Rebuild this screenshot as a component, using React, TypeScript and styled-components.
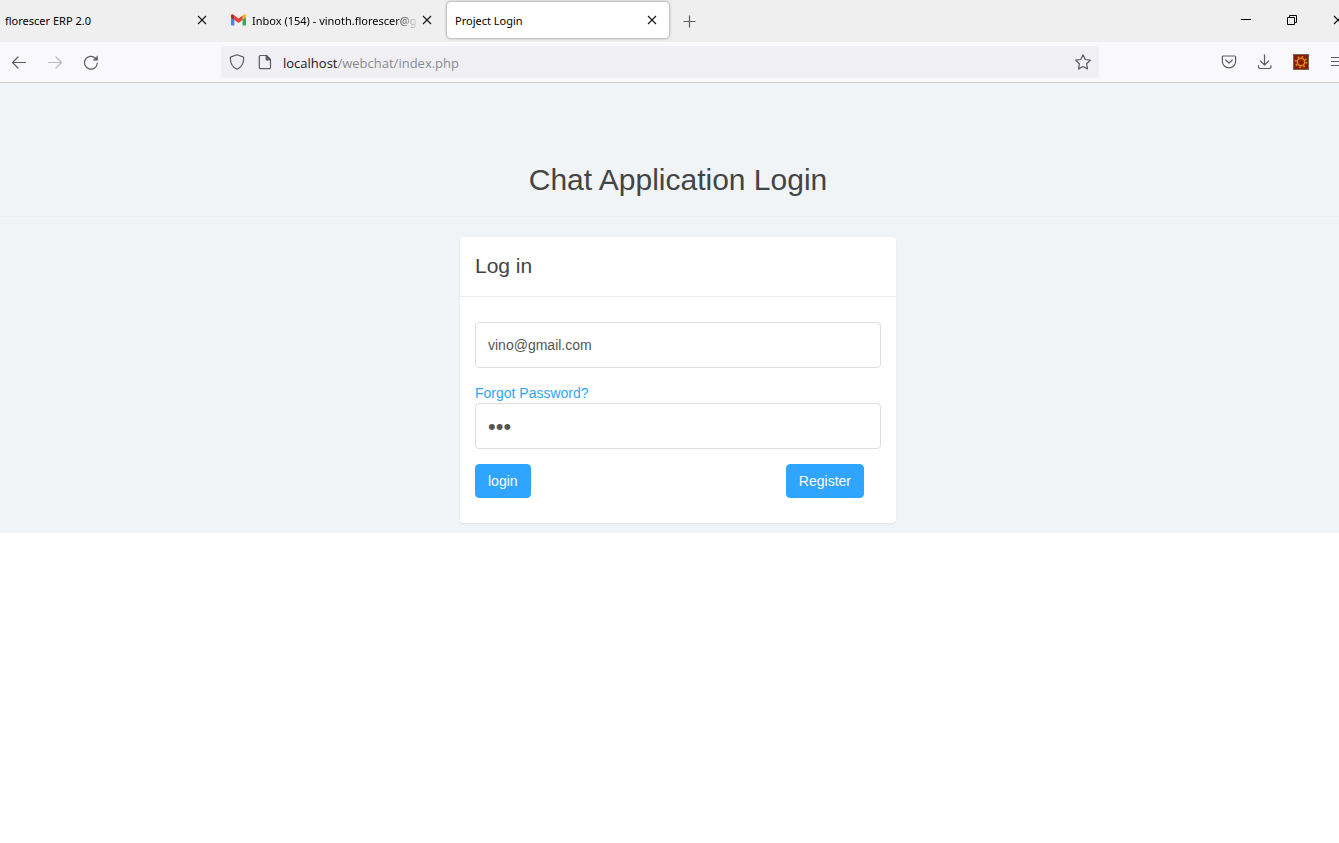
import React, { useState } from "react";
import styled, { createGlobalStyle } from "styled-components";

const GlobalStyle = createGlobalStyle`
  *, *::before, *::after { box-sizing: border-box; }
  body { margin: 0; background: #fff; color: #444; overflow-x: hidden; font: 14px/20px "Liberation Sans", Arial, sans-serif; }
  button, input { font-family: inherit; }
  svg { display: block; flex: none; }
`;

const Viewport = styled.div`
  overflow: hidden;
`;

/* The window is maximised and runs slightly past both edges of the screen area. */
const BrowserWindow = styled.div`
  margin: 0 -22px 0 -5px;
`;

const TabStrip = styled.div`
  display: flex;
  align-items: center;
  gap: 3px;
  height: 42px;
  padding-left: 2px;
  background: #efefef;
  font: 11px/16px "Noto Sans", "Segoe UI", sans-serif;
  color: #000;
`;

const Tab = styled.div<{ $active?: boolean }>`
  display: flex;
  align-items: center;
  gap: 6px;
  width: 222px;
  height: 36px;
  margin-bottom: 2px;
  padding: 0 9px 0 8px;
  border-radius: 4px;
  background: ${(p) => (p.$active ? "#fff" : "transparent")};
  box-shadow: ${(p) => (p.$active ? "0 0 3px rgba(0, 0, 0, 0.5)" : "none")};
`;

const TabTitle = styled.span<{ $fade?: boolean }>`
  flex: 1;
  min-width: 0;
  padding-top: 1px;
  white-space: nowrap;
  ${(p) => p.$fade && "margin-right: -6px; mask-image: linear-gradient(to left, transparent, #000 24px);"}
`;

const IconButton = styled.button<{ $w: number; $dim?: boolean }>`
  display: flex;
  align-items: center;
  justify-content: center;
  flex: none;
  width: ${(p) => p.$w}px;
  height: 32px;
  padding: 0;
  border: 0;
  background: none;
  color: #5b5b66;
  opacity: ${(p) => (p.$dim ? 0.4 : 1)};
`;

const CloseButton = styled(IconButton)`
  height: 16px;
  color: #15141a;
`;

const WindowControls = styled.div`
  display: flex;
  margin-left: auto;
  margin-bottom: 2px;
  button { color: #000; }
`;

const Toolbar = styled.div`
  display: flex;
  align-items: center;
  height: 41px;
  padding: 0 6px;
  background: #f9f9fb;
  border-bottom: 1px solid #ccc;
`;

const ToolGroup = styled.div`
  display: flex;
`;

const AddressBar = styled.div`
  display: flex;
  align-items: center;
  gap: 10px;
  flex: 1;
  height: 32px;
  margin: 0 112px;
  padding: 0 8px;
  border-radius: 4px;
  background: #f0f0f4;
  color: #5b5b66;
`;

const SiteIcons = styled.div`
  display: flex;
  gap: 12px;
`;

const Address = styled.div`
  flex: 1;
  padding-top: 2px;
  font: 13px/18px "Open Sans", "Segoe UI", sans-serif;
  color: #8a8a8e;
`;

const Host = styled.span`
  color: #15141a;
`;

const Page = styled.main`
  padding: 80px 0 10px;
  background: #f0f4f7;
`;

const Title = styled.h2`
  margin: 0;
  padding-bottom: 20px;
  border-bottom: 1px solid #eee;
  font-size: 30px;
  font-weight: 400;
  line-height: 33px;
  text-align: center;
`;

const Card = styled.section`
  width: 436px;
  max-width: 100%;
  margin: 20px auto 0;
  border-radius: 4px;
  background: #fff;
  box-shadow: 0 1px 2px rgba(0, 0, 0, 0.08);
`;

const CardHeading = styled.h3`
  margin: 0;
  padding: 14px 15px 15px;
  border-bottom: 1px solid #e9ecf2;
  font-size: 21px;
  font-weight: 400;
  line-height: 30px;
`;

const Form = styled.form`
  padding: 25px 15px;
`;

const Field = styled.div`
  display: flex;
  flex-direction: column;
  align-items: flex-start;
  margin-bottom: 15px;
`;

const TextInput = styled.input`
  width: 100%;
  height: 46px;
  padding: 6px 12px;
  border: 1px solid #ddd;
  border-radius: 4px;
  background: #fff;
  color: #555;
  font-size: 14px;
  line-height: 20px;
  outline: none;

  &[type="password"] { padding-top: 8px; font-size: 22px; }
`;

const ForgotLink = styled.a`
  color: #30a5ff;
  text-decoration: none;
`;

const Actions = styled.div`
  display: flex;
  justify-content: space-between;
  padding-right: 17px;
`;

const PrimaryButton = styled.button`
  height: 34px;
  padding: 6px 12px;
  border: 1px solid #30a5ff;
  border-radius: 4px;
  background: #30a5ff;
  color: #fff;
  font-size: 14px;
  line-height: 20px;
`;

const Cross = () => (
  <svg width="10" height="10" viewBox="0 0 10 10" stroke="currentColor" strokeWidth="1.1" fill="none">
    <path d="M1 1l8 8M9 1L1 9" />
  </svg>
);

const Gmail = () => (
  <svg width="16" height="12" viewBox="-1 0 16 12">
    <path d="M0 2.5L3.4 5v6.5H1a1 1 0 0 1-1-1z" fill="#4285f4" />
    <path d="M15 2.5L11.6 5v6.5H14a1 1 0 0 0 1-1z" fill="#34a853" />
    <path d="M11.6 1.5l1-.8C13.700-.1 15 .6 15 2v1.500L11.6 6z" fill="#fbbc04" />
    <path d="M3.400 1.500L7.500 4.600l4.100-3.100V6L7.500 9 3.400 6z" fill="#ea4335" />
    <path d="M0 3.500V2C0 .6 1.300-.1 2.400.7l1 .8V6z" fill="#c5221f" />
  </svg>
);

const Icon = ({ children }: { children: React.ReactNode }) => (
  <svg width="16" height="16" viewBox="0 0 16 16" fill="none" stroke="currentColor" strokeWidth="1.2" strokeLinecap="round" strokeLinejoin="round">
    {children}
  </svg>
);

function TabBar() {
  return (
    <TabStrip>
      <Tab>
        <TabTitle>florescer ERP 2.0</TabTitle>
        <CloseButton $w={16} aria-label="Close tab"><Cross /></CloseButton>
      </Tab>
      <Tab>
        <Gmail />
        <TabTitle $fade>Inbox (154) - vinoth.florescer@g</TabTitle>
        <CloseButton $w={16} aria-label="Close tab"><Cross /></CloseButton>
      </Tab>
      <Tab $active>
        <TabTitle>Project Login</TabTitle>
        <CloseButton $w={16} aria-label="Close tab"><Cross /></CloseButton>
      </Tab>
      <IconButton $w={34} aria-label="New tab">
        <svg width="13" height="13" viewBox="0 0 13 13" stroke="currentColor" strokeWidth="1.2">
          <path d="M6.500 .5v12M.5 6.500h12" />
        </svg>
      </IconButton>
      <WindowControls>
        <IconButton $w={46} aria-label="Minimize">
          <svg width="10" height="11" viewBox="0 0 10 11" stroke="currentColor"><path d="M0 4.500h10" /></svg>
        </IconButton>
        <IconButton $w={46} aria-label="Restore">
          <svg width="10" height="10" viewBox="0 0 10 10" stroke="currentColor" fill="none">
            <path d="M.5 2.500h7v7h-7zM2.500 2.500v-2h7v7h-2" />
          </svg>
        </IconButton>
        <IconButton $w={46} aria-label="Close"><Cross /></IconButton>
      </WindowControls>
    </TabStrip>
  );
}

function NavigationBar() {
  return (
    <Toolbar>
      <ToolGroup>
        <IconButton $w={36} aria-label="Back">
          <Icon><path d="M14.500 8.500H1.500M7 3L1.500 8.500 7 14" /></Icon>
        </IconButton>
        <IconButton $w={36} $dim aria-label="Forward">
          <Icon><path d="M1.500 8.500h13M9 3L14.500 8.500 9 14" /></Icon>
        </IconButton>
        <IconButton $w={36} aria-label="Reload">
          <Icon>
            <path d="M14.300 9A6.400 6.400 0 1 1 12.200 4" />
            <path d="M14.500 2.200v4h-4z" fill="currentColor" strokeWidth=".6" />
          </Icon>
        </IconButton>
      </ToolGroup>
      <AddressBar>
        <SiteIcons>
          <Icon><path d="M8 .8l5.900 2.100c.5.200.8.600.8 1.100 0 4.400-1.400 8.800-6.700 11.200C2.700 12.800 1.300 8.400 1.300 4c0-.5.300-.9.800-1.100z" /></Icon>
          <Icon>
            <path d="M3.500 1.500h6l4 4v8a1.200 1.200 0 0 1-1.200 1.200H3.500a1.200 1.200 0 0 1-1.200-1.200V2.700a1.200 1.200 0 0 1 1.200-1.200z" />
            <path d="M9.200 1.500v4.300h4.300z" fill="currentColor" />
          </Icon>
        </SiteIcons>
        <Address><Host>localhost</Host>/webchat/index.php</Address>
        <Icon><path d="M8 .8l2.200 4.700 5.100.7-3.700 3.600.9 5.100L8 12.500l-4.500 2.400.9-5.100L.7 6.200l5.100-.7z" /></Icon>
      </AddressBar>
      <ToolGroup>
        <IconButton $w={36} aria-label="Save to Pocket">
          <Icon>
            <path d="M2.400 2h11.200c.6 0 1 .4 1 1v4.500a6.600 6.300 0 0 1-13.200 0V3c0-.6.400-1 1-1z" />
            <path d="M4.700 6L8 9l3.300-3" />
          </Icon>
        </IconButton>
        <IconButton $w={36} aria-label="Downloads">
          <Icon><path d="M7.500 .8v10M3.300 6.800L7.500 11l4.200-4.200M1.500 11.500v1.200A1.800 1.800 0 0 0 3.300 14.500h8.900a1.800 1.800 0 0 0 1.800-1.800v-1.200" /></Icon>
        </IconButton>
        <IconButton $w={36} aria-label="Extension">
          <svg width="16" height="16" viewBox="0 0 16 16">
            <rect x=".5" y=".5" width="15" height="15" fill="#8b1a00" stroke="#7b6358" />
            <circle cx="8" cy="8" r="5.300" fill="none" stroke="#d88a18" strokeWidth="2" strokeDasharray="1.500 2.663" />
            <circle cx="8" cy="8" r="3.700" fill="none" stroke="#d88a18" strokeWidth="1.500" />
          </svg>
        </IconButton>
        <IconButton $w={36} aria-label="Menu">
          <svg width="14" height="12" viewBox="0 0 14 12" stroke="currentColor" strokeWidth="1.200">
            <path d="M1 1.500h12M1 5.500h12M1 9.500h12" />
          </svg>
        </IconButton>
      </ToolGroup>
    </Toolbar>
  );
}

function LoginPage() {
  const [email, setEmail] = useState("vino@gmail.com");
  const [password, setPassword] = useState("123");
  return (
    <Page>
      <Title>Chat Application Login</Title>
      <Card>
        <CardHeading>Log in</CardHeading>
        <Form onSubmit={(e) => e.preventDefault()}>
          <Field>
            <TextInput type="email" aria-label="Email" value={email} onChange={(e) => setEmail(e.target.value)} />
          </Field>
          <Field>
            <ForgotLink href="#forgot">Forgot Password?</ForgotLink>
            <TextInput type="password" aria-label="Password" value={password} onChange={(e) => setPassword(e.target.value)} />
          </Field>
          <Actions>
            <PrimaryButton type="submit">login</PrimaryButton>
            <PrimaryButton type="button">Register</PrimaryButton>
          </Actions>
        </Form>
      </Card>
    </Page>
  );
}

export default function App() {
  return (
    <Viewport>
      <GlobalStyle />
      <BrowserWindow>
        <TabBar />
        <NavigationBar />
        <LoginPage />
      </BrowserWindow>
    </Viewport>
  );
}
